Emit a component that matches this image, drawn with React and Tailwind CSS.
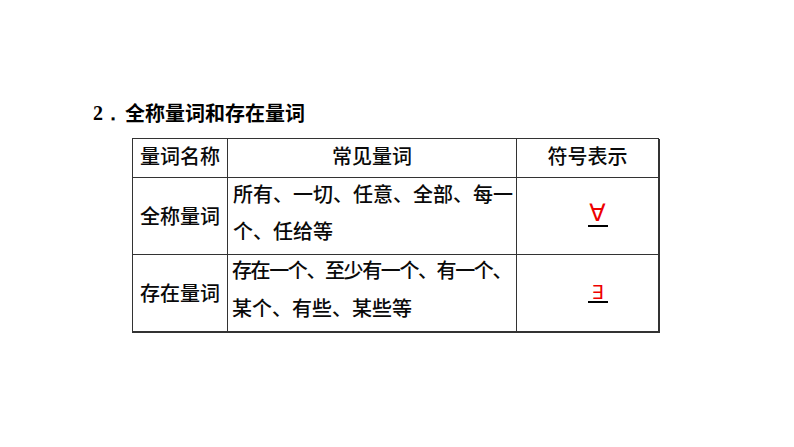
export default function App() {
  const cjk = { fontFamily: '"Noto Sans CJK SC", "Liberation Sans", sans-serif' };
  return (
    <div className="w-[794px] h-[447px] bg-white text-black" style={cjk}>
      <div className="pt-[99px] pl-[93px] text-[20px] leading-[28px] font-bold flex">
        <span className="font-['Liberation_Serif'] w-[32px]">2．</span>
        <span>全称量词和存在量词</span>
      </div>
      <div className="pt-[11px] pl-[132px]">
        <div className="grid grid-cols-[95px_289px_143px] grid-rows-[39px_77px_78px] w-[527px] border-l border-t border-[#333] text-[20px] text-[#0a0a0a] font-medium">
          <div className="border-r border-b border-[#333] flex items-start justify-center leading-[34px]">量词名称</div>
          <div className="border-r border-b border-[#333] flex items-start justify-center leading-[34px]">常见量词</div>
          <div className="border-r-2 border-b border-[#333] flex items-start justify-center leading-[34px]">符号表示</div>

          <div className="border-r border-b border-[#333] flex items-center justify-center">全称量词</div>
          <div className="border-r border-b border-[#333] pl-[5px] leading-[37px] -mt-[3px] pt-0">
            <div>所有、一切、任意、全部、每一</div>
            <div>个、任给等</div>
          </div>
          <div className="border-r-2 border-b border-[#333] flex items-center justify-center pl-[20px]">
            <span className="border-b-2 border-black w-[20px] h-[21px] flex justify-center items-end text-[#e00] text-[24px] leading-[24px] font-normal font-['DejaVu_Sans']">∀</span>
          </div>

          <div className="border-r border-b-2 border-[#333] flex items-center justify-center">存在量词</div>
          <div className="border-r border-b-2 border-[#333] pl-[4px] leading-[38px] -mt-[4px]">
            <div className="tracking-[-1.4px] whitespace-nowrap">存在一个、至少有一个、有一个、</div>
            <div>某个、有些、某些等</div>
          </div>
          <div className="border-r-2 border-b-2 border-[#333] flex items-center justify-center pl-[20px]">
            <span className="border-b-2 border-black w-[20px] h-[20px] flex justify-center items-start text-[#e00] text-[19px] leading-[18px] font-normal font-['DejaVu_Sans']">∃</span>
          </div>
        </div>
      </div>
    </div>
  );
}
